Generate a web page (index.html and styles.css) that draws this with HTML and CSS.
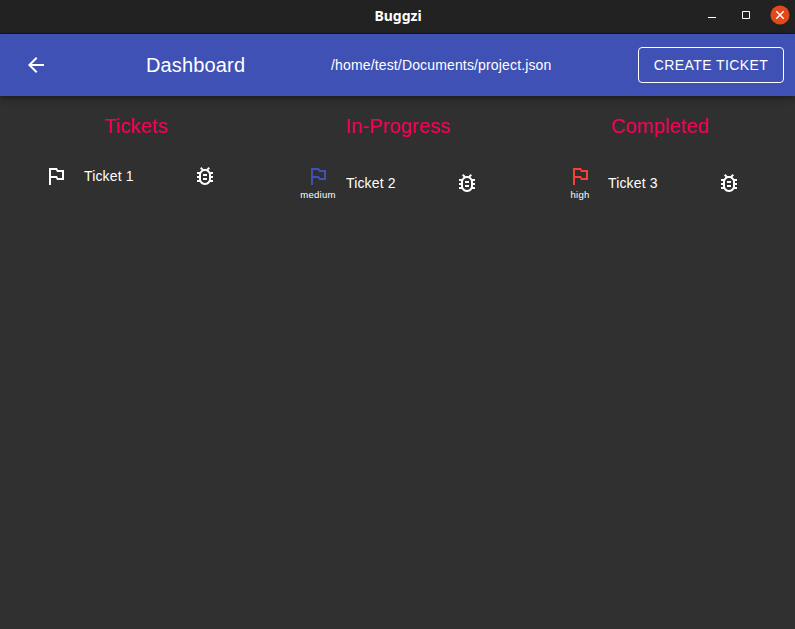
FILE: index.html
```html
<!DOCTYPE html>
<html lang="en">
<head>
<meta charset="utf-8">
<title>Buggzi</title>
<link rel="stylesheet" href="styles.css">
</head>
<body>
<svg class="sprite" aria-hidden="true">
  <symbol id="flag" viewBox="0 0 24 24"><path d="M14 6l-1-2H5v17h2v-7h5l1 2h7V6h-6zm4 8h-4l-1-2H7V6h5l1 2h5v6z"/></symbol>
  <symbol id="bug" viewBox="0 0 24 24"><path d="M20 8h-2.810c-.45-.78-1.070-1.450-1.820-1.960L17 4.410 15.590 3l-2.170 2.170C12.960 5.060 12.490 5 12 5s-.96.06-1.410.17L8.410 3 7 4.410l1.620 1.630C7.880 6.550 7.260 7.220 6.810 8H4v2h2.090c-.05.33-.09.66-.09 1v1H4v2h2v1c0 .34.04.67.09 1H4v2h2.810c1.040 1.790 2.970 3 5.190 3s4.150-1.210 5.190-3H20v-2h-2.090c.05-.33.09-.66.09-1v-1h2v-2h-2v-1c0-.34-.04-.67-.09-1H20V8zm-4 4v3c0 .22-.03.47-.07.7l-.1.65-.37.65c-.72 1.240-2.040 2-3.460 2s-2.740-.77-3.460-2l-.37-.64-.1-.65C8.030 15.480 8 15.230 8 15v-4c0-.23.03-.48.07-.7l.1-.65.37-.65c.3-.52.72-.97 1.210-1.310l.57-.39.74-.18c.31-.08.63-.12.94-.12.32 0 .63.04.95.12l.68.16.61.42c.5.34.91.78 1.210 1.310l.38.65.1.65c.04.22.07.47.07.69v1zm-6 2h4v2h-4zm0-4h4v2h-4z"/></symbol>
</svg>
<div class="titlebar">
  <span class="window-title">Buggzi</span>
  <div class="window-controls">
    <svg width="10" height="10" viewBox="0 0 10 10"><path d="M1 7.500h8" stroke="#fff"/></svg>
    <svg width="8" height="8" viewBox="0 0 8 8"><path d="M.5.5h7v7h-7z" fill="none" stroke="#fff"/></svg>
    <svg width="20" height="20" viewBox="0 0 20 20"><circle cx="10" cy="10" r="9.500" fill="#e2491a"/><path d="M6.300 6.300l7.400 7.400M13.700 6.300l-7.400 7.400" stroke="#fff" stroke-width="1.400"/></svg>
  </div>
</div>
<header class="appbar">
  <svg class="icon" viewBox="0 0 24 24"><path d="M20 11H7.830l5.590-5.590L12 4l-8 8 8 8 1.410-1.410L7.830 13H20v-2z"/></svg>
  <h1 class="page-title">Dashboard</h1>
  <span class="path">/home/test/Documents/project.json</span>
  <button class="create">CREATE TICKET</button>
</header>
<main class="board">
  <section>
    <h2>Tickets</h2>
    <div class="ticket">
      <div class="priority"><svg class="icon"><use href="#flag"/></svg></div>
      <span class="name">Ticket 1</span>
      <svg class="icon"><use href="#bug"/></svg>
    </div>
  </section>
  <section>
    <h2>In-Progress</h2>
    <div class="ticket">
      <div class="priority"><svg class="icon medium"><use href="#flag"/></svg><span class="level">medium</span></div>
      <span class="name">Ticket 2</span>
      <svg class="icon"><use href="#bug"/></svg>
    </div>
  </section>
  <section>
    <h2>Completed</h2>
    <div class="ticket">
      <div class="priority"><svg class="icon high"><use href="#flag"/></svg><span class="level">high</span></div>
      <span class="name">Ticket 3</span>
      <svg class="icon"><use href="#bug"/></svg>
    </div>
  </section>
</main>
</body>
</html>
```
FILE: styles.css
```css
* { box-sizing: border-box; }
body {
  margin: 0;
  height: 629px;
  overflow: hidden;
  background: #303030;
  color: #fff;
  font: 14px/20px "Liberation Sans", Arial, sans-serif;
  letter-spacing: 0.01071em;
}
h1, h2 { margin: 0; font-size: 20px; font-weight: 400; line-height: 32px; letter-spacing: 0.0075em; }
.sprite { display: none; }
.icon { display: block; width: 24px; height: 24px; fill: currentColor; flex: none; }
.titlebar {
  height: 34px;
  display: grid;
  grid-template-columns: 1fr auto 1fr;
  align-items: center;
  padding: 0 5px 3px 6px;
  background: #222;
  border-bottom: 1px solid #181818;
}
.window-title { grid-column: 2; font: bold 14px/20px "Noto Sans", sans-serif; letter-spacing: 0; padding-top: 2px; }
.window-controls { grid-column: 3; display: flex; justify-content: flex-end; align-items: center; }
.window-controls svg { display: block; margin-left: 20px; }
.window-controls svg:nth-child(2) { margin-left: 25px; }
.appbar {
  position: relative;
  height: 62px;
  display: flex;
  align-items: center;
  padding: 0 11px 0 24px;
  background: #3f51b5;
  box-shadow: 0 2px 4px -1px rgba(0,0,0,.2), 0 4px 5px rgba(0,0,0,.14), 0 1px 10px rgba(0,0,0,.12);
}
.page-title { margin-left: 98px; width: 185px; }
.path { flex: 1; }
.create {
  width: 146px;
  height: 36px;
  padding: 0;
  border: 1px solid #fff;
  border-radius: 4px;
  background: transparent;
  color: #fff;
  font: 14px/24px "Liberation Sans", Arial, sans-serif;
  letter-spacing: 0.02857em;
}
.board { display: grid; grid-template-columns: repeat(3, 262px); padding: 14px 0 0 5px; }
h2 { color: #f50057; text-align: center; }
.ticket { display: flex; align-items: center; margin: 22px 0 0 23px; }
.priority { width: 56px; display: flex; flex-direction: column; align-items: center; }
.level { font-size: 9.6px; line-height: 14px; letter-spacing: 0.02em; }
.name { width: 109px; }
.medium { color: #3f51b5; }
.high { color: #f44336; }
```
